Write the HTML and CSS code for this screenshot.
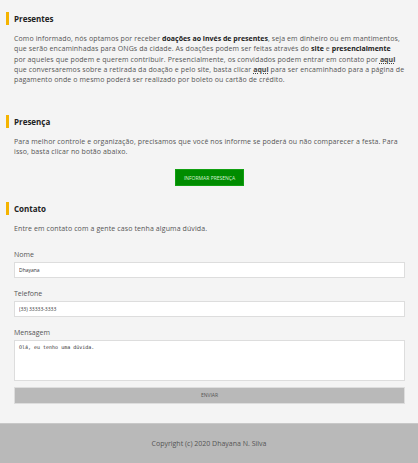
FILE: index.html
```html
<!DOCTYPE html>
<html lang="pt-BR">
<head>
<meta charset="utf-8">
<title>Casamento</title>
<link rel="stylesheet" href="styles.css">
</head>
<body>
<main class="content">
  <section class="section">
    <h2 class="title">Presentes</h2>
    <p class="text">Como informado, nós optamos por receber <strong>doações ao invés de presentes</strong>, seja em dinheiro ou em mantimentos, que serão encaminhadas para ONGs da cidade. As doações podem ser feitas através do <strong>site</strong> e <strong>presencialmente</strong><br>por aqueles que podem e querem contribuir. Presencialmente, os convidados podem entrar em contato por <a class="link" href="#">aqui</a> que conversaremos sobre a retirada da doação e pelo site, basta clicar <a class="link" href="#">aqui</a> para ser encaminhado para a página de pagamento onde o mesmo poderá ser realizado por boleto ou cartão de crédito.</p>
  </section>
  <section class="section section-presenca">
    <h2 class="title">Presença</h2>
    <p class="text">Para melhor controle e organização, precisamos que você nos informe se poderá ou não comparecer a festa. Para isso, basta clicar no botão abaixo.</p>
    <div class="center"><button class="btn-green" type="button">INFORMAR PRESENÇA</button></div>
  </section>
  <section class="section section-contato">
    <h2 class="title">Contato</h2>
    <p class="text">Entre em contato com a gente caso tenha alguma dúvida.</p>
    <form class="form">
      <label class="label" for="nome">Nome</label>
      <input class="field" id="nome" type="text" value="Dhayana">
      <label class="label" for="tel">Telefone</label>
      <input class="field" id="tel" type="text" value="(33) 33333-3333">
      <label class="label" for="msg">Mensagem</label>
      <textarea class="area" id="msg">Olá, eu tenho uma dúvida.</textarea>
      <button class="btn-send" type="button">ENVIAR</button>
    </form>
  </section>
</main>
<footer class="footer">Copyright (c) 2020 Dhayana N. Silva</footer>
</body>
</html>
```
FILE: styles.css
```css
* { box-sizing: border-box; }
html, body { margin: 0; padding: 0; }
body {
  background: #f4f4f4;
  font-family: "Open Sans", "Noto Sans", sans-serif;
  color: #555;
  font-size: 7px;
}
.content { padding: 12px 13px 19px 14px; }
.section { margin: 0; }
.title {
  margin: 0 0 0 -8px;
  border-left: 3px solid #f5b400;
  padding-left: 5px;
  height: 13px;
  line-height: 14px;
  font-size: 8px;
  font-weight: 700;
  color: #222;
}
.text {
  margin: 9px 0 0;
  line-height: 10.35px;
  font-size: 7px;
  letter-spacing: 0.11px;
  color: #555;
}
.text strong { color: #222; font-weight: 700; letter-spacing: 0; }
.link { color: #444; text-decoration: underline dotted; font-weight: 700; letter-spacing: 0; }
.section-presenca { margin-top: 29px; }
.section-contato { margin-top: 16px; }
.center { display: flex; justify-content: center; margin-top: 12px; }
.btn-green {
  background: #008c00;
  border: 1px solid #11a011;
  color: #d8f0d8;
  font-family: "Open Sans", sans-serif;
  font-size: 5px;
  width: 69px;
  height: 17px;
  padding: 0;
}
.form { display: flex; flex-direction: column; margin-top: 15px; }
.label { font-size: 7px; line-height: 10px; height: 10px; color: #555; margin-bottom: 2px; }
.field {
  height: 16px;
  background: #fff;
  border: 1px solid #ddd;
  font-family: "Open Sans", sans-serif;
  font-size: 5px;
  color: #333;
  padding: 0 4px;
  margin-bottom: 11px;
}
.area {
  height: 41px;
  background: #fff;
  border: 1px solid #ddd;
  font-family: "DejaVu Sans Mono", monospace;
  font-size: 5px;
  color: #333;
  padding: 3px 4px;
  resize: none;
  margin-bottom: 6px;
}
.btn-send {
  height: 17px;
  background: #b9b9b9;
  border: 1px solid #ddd;
  color: #555;
  font-family: "Open Sans", sans-serif;
  font-size: 5px;
  padding: 0;
}
.footer {
  background: #b9b9b9;
  border-top: 1px solid #c8c8c8;
  height: 41px;
  display: flex;
  align-items: center;
  justify-content: center;
  font-size: 7px;
  color: #555;
}
```
